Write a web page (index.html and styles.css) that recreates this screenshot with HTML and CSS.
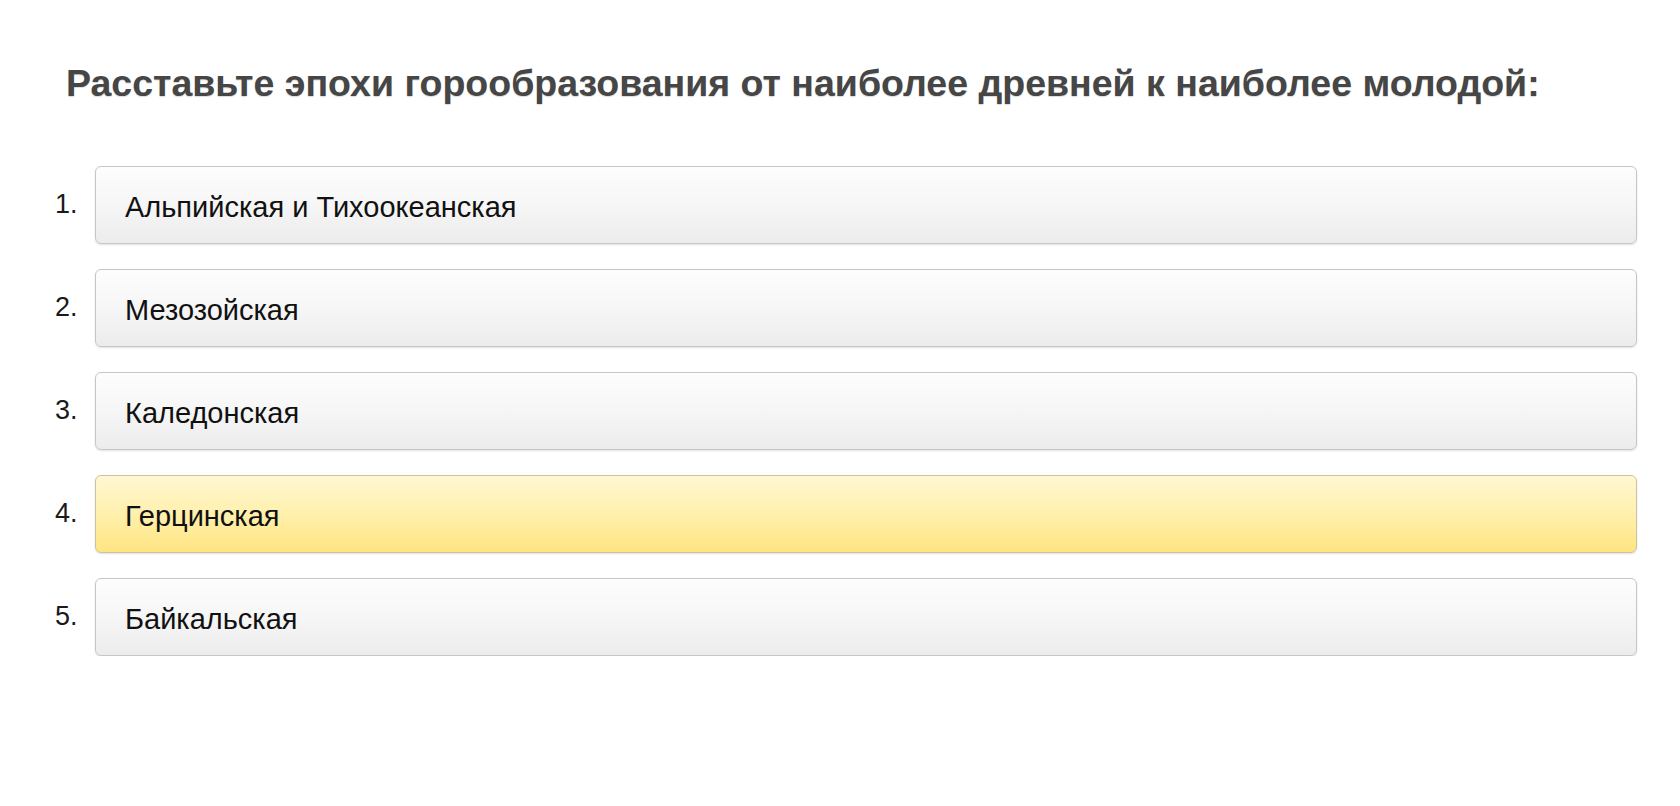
FILE: index.html
```html
<!DOCTYPE html>
<html lang="ru">
<head>
    <meta charset="UTF-8">
    <meta name="viewport" content="width=device-width, initial-scale=1.0">
    <title>Порядок эпох</title>
    <link rel="stylesheet" href="styles.css">
</head>
<body>
    <div class="task">
        <h1 class="question">Расставьте эпохи горообразования от наиболее древней к наиболее молодой:</h1>

        <ol class="order-list">
            <li class="order-item">
                <span class="num">1.</span>
                <div class="card">Альпийская и Тихоокеанская</div>
            </li>
            <li class="order-item">
                <span class="num">2.</span>
                <div class="card">Мезозойская</div>
            </li>
            <li class="order-item">
                <span class="num">3.</span>
                <div class="card">Каледонская</div>
            </li>
            <li class="order-item">
                <span class="num">4.</span>
                <div class="card selected">Герцинская</div>
            </li>
            <li class="order-item">
                <span class="num">5.</span>
                <div class="card">Байкальская</div>
            </li>
        </ol>
    </div>
</body>
</html>
```

FILE: styles.css
```css
body {
    margin: 0;
    background-color: #ffffff;
    font-family: "Liberation Sans", Arial, sans-serif;
    color: #111;
}

.task {
    padding: 0 43px 0 55px;
}

.question {
    margin: 0;
    padding: 62px 0 0 11px;
    font-size: 37.5px;
    font-weight: bold;
    line-height: 42px;
    color: #464646;
    text-shadow: 0 1px 1px rgba(0, 0, 0, 0.15);
}

.order-list {
    list-style: none;
    margin: 62px 0 0 0;
    padding: 0;
    display: flex;
    flex-direction: column;
    gap: 25px;
}

.order-item {
    display: flex;
    align-items: center;
}

.num {
    width: 40px;
    font-size: 27px;
    color: #1a1a1a;
    margin-top: -2px;
}

.card {
    flex: 1;
    display: flex;
    align-items: center;
    padding: 4px 0 0 29px;
    height: 72px;
    border: 1px solid #c6c6c6;
    border-radius: 6px;
    background: linear-gradient(to bottom, #fdfdfd 0%, #f6f6f6 50%, #ececec 100%);
    box-shadow: 0 1px 2px rgba(0, 0, 0, 0.12);
    font-size: 29px;
    color: #111;
}

.card.selected {
    border-color: #cbc3a0;
    background: linear-gradient(to bottom, #fff7d2 0%, #fff0ad 50%, #ffe581 100%);
}
```
